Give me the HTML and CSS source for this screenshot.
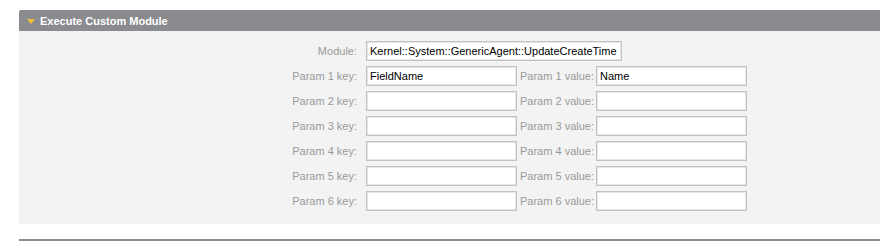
FILE: index.html
```
<!DOCTYPE html>
<html lang="en">
  <head>
    <meta charset="UTF-8" />
    <title>Execute Custom Module</title>
    <link rel="stylesheet" href="styles.css">
  </head>
  <body>
    <div class="widget">
      <div class="widget-header">
        <span class="toggle"></span>
        <h2>Execute Custom Module</h2>
      </div>
      <div class="widget-content">
        <div class="row">
          <label class="label" for="module">Module:</label>
          <input type="text" id="module" class="wide" value="Kernel::System::GenericAgent::UpdateCreateTime" />
        </div>
        <div class="row">
          <label class="label" for="key1">Param 1 key:</label>
          <input type="text" id="key1" value="FieldName" />
          <label class="value-label" for="val1">Param 1 value:</label>
          <input type="text" id="val1" value="Name" />
        </div>
        <div class="row">
          <label class="label" for="key2">Param 2 key:</label>
          <input type="text" id="key2" />
          <label class="value-label" for="val2">Param 2 value:</label>
          <input type="text" id="val2" />
        </div>
        <div class="row">
          <label class="label" for="key3">Param 3 key:</label>
          <input type="text" id="key3" />
          <label class="value-label" for="val3">Param 3 value:</label>
          <input type="text" id="val3" />
        </div>
        <div class="row">
          <label class="label" for="key4">Param 4 key:</label>
          <input type="text" id="key4" />
          <label class="value-label" for="val4">Param 4 value:</label>
          <input type="text" id="val4" />
        </div>
        <div class="row">
          <label class="label" for="key5">Param 5 key:</label>
          <input type="text" id="key5" />
          <label class="value-label" for="val5">Param 5 value:</label>
          <input type="text" id="val5" />
        </div>
        <div class="row">
          <label class="label" for="key6">Param 6 key:</label>
          <input type="text" id="key6" />
          <label class="value-label" for="val6">Param 6 value:</label>
          <input type="text" id="val6" />
        </div>
      </div>
    </div>
    <div class="widget-next"></div>
  </body>
</html>
```

FILE: styles.css
```
* {
  box-sizing: border-box;
}
body {
  margin: 0;
  padding: 10px 0 0 19px;
  background: #fff;
  font-family: "Liberation Sans", Arial, sans-serif;
  font-size: 11px;
  overflow: hidden;
}
.widget-header {
  display: flex;
  align-items: center;
  height: 21px;
  background: #8a8b8e;
  border-top-left-radius: 2px;
  padding-left: 8px;
}
.toggle {
  width: 0;
  height: 0;
  border-left: 4.5px solid transparent;
  border-right: 4.5px solid transparent;
  border-top: 5px solid #f4be3c;
  margin-right: 5px;
  margin-top: 1px;
}
.widget-header h2 {
  margin: 0;
  color: #fff;
  font-size: 11px;
  font-weight: 700;
}
.widget-content {
  background: #f3f3f3;
  padding: 10px 0 13px;
}
.row {
  display: flex;
  align-items: center;
  height: 20px;
  margin-bottom: 5px;
}
.row:last-child {
  margin-bottom: 0;
}
.label {
  width: 338px;
  margin-right: 9px;
  text-align: right;
  color: #9a9a9a;
}
.value-label {
  margin: 0 2px 0 3px;
  color: #9a9a9a;
}
input {
  width: 151px;
  height: 20px;
  margin: 0;
  padding: 0 3px;
  border: 1px solid #c2c2c2;
  box-shadow: inset 0 0 0 1px #e6e6e6;
  background: #fff;
  font-family: "Liberation Sans", Arial, sans-serif;
  font-size: 11px;
  color: #000;
  outline: none;
}
input.wide {
  width: 256px;
}
.widget-next {
  margin-top: 15px;
  height: 4px;
  background: #8a8b8e;
}
```
